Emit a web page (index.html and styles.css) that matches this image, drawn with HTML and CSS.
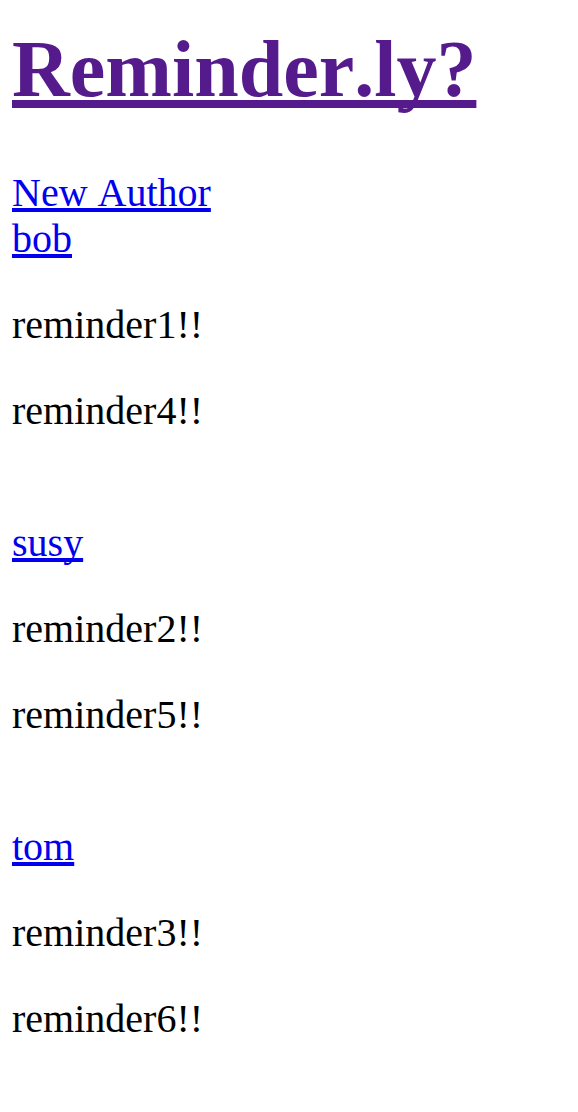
FILE: index.html
```html
<!DOCTYPE html>
<html lang="en">
<head>
<meta charset="utf-8">
<title>Reminder.ly?</title>
<link rel="stylesheet" href="styles.css">
</head>
<body>
<header>
<h1 class="site-title"><a class="title-link" href="#">Reminder.ly?</a></h1>
<a class="link" href="#new">New Author</a>
</header>
<main class="authors">
<section class="author">
<a class="link" href="#bob">bob</a>
<p class="reminder">reminder1!!</p>
<p class="reminder">reminder4!!</p>
</section>
<section class="author">
<a class="link" href="#susy">susy</a>
<p class="reminder">reminder2!!</p>
<p class="reminder">reminder5!!</p>
</section>
<section class="author">
<a class="link" href="#tom">tom</a>
<p class="reminder">reminder3!!</p>
<p class="reminder">reminder6!!</p>
</section>
</main>
</body>
</html>
```

FILE: styles.css
```css
body {
  margin: 0;
  padding: 24px 12px;
  background: #fff;
  color: #000;
  font-family: "Liberation Serif", "Times New Roman", serif;
  font-size: 40px;
  line-height: 46px;
  font-kerning: none;
}

.site-title {
  margin: 0 0 56px;
  font-size: 80px;
  line-height: 90px;
}

.title-link {
  color: #551a8b;
  text-decoration-thickness: 8px;
  text-underline-offset: 4px;
  text-decoration-skip-ink: none;
}

.link {
  color: #0000ee;
  text-decoration-thickness: 4px;
  text-underline-offset: 2px;
  text-decoration-skip-ink: none;
}

.authors {
  display: grid;
  gap: 86px;
}

.reminder {
  margin: 40px 0 0;
}
```
